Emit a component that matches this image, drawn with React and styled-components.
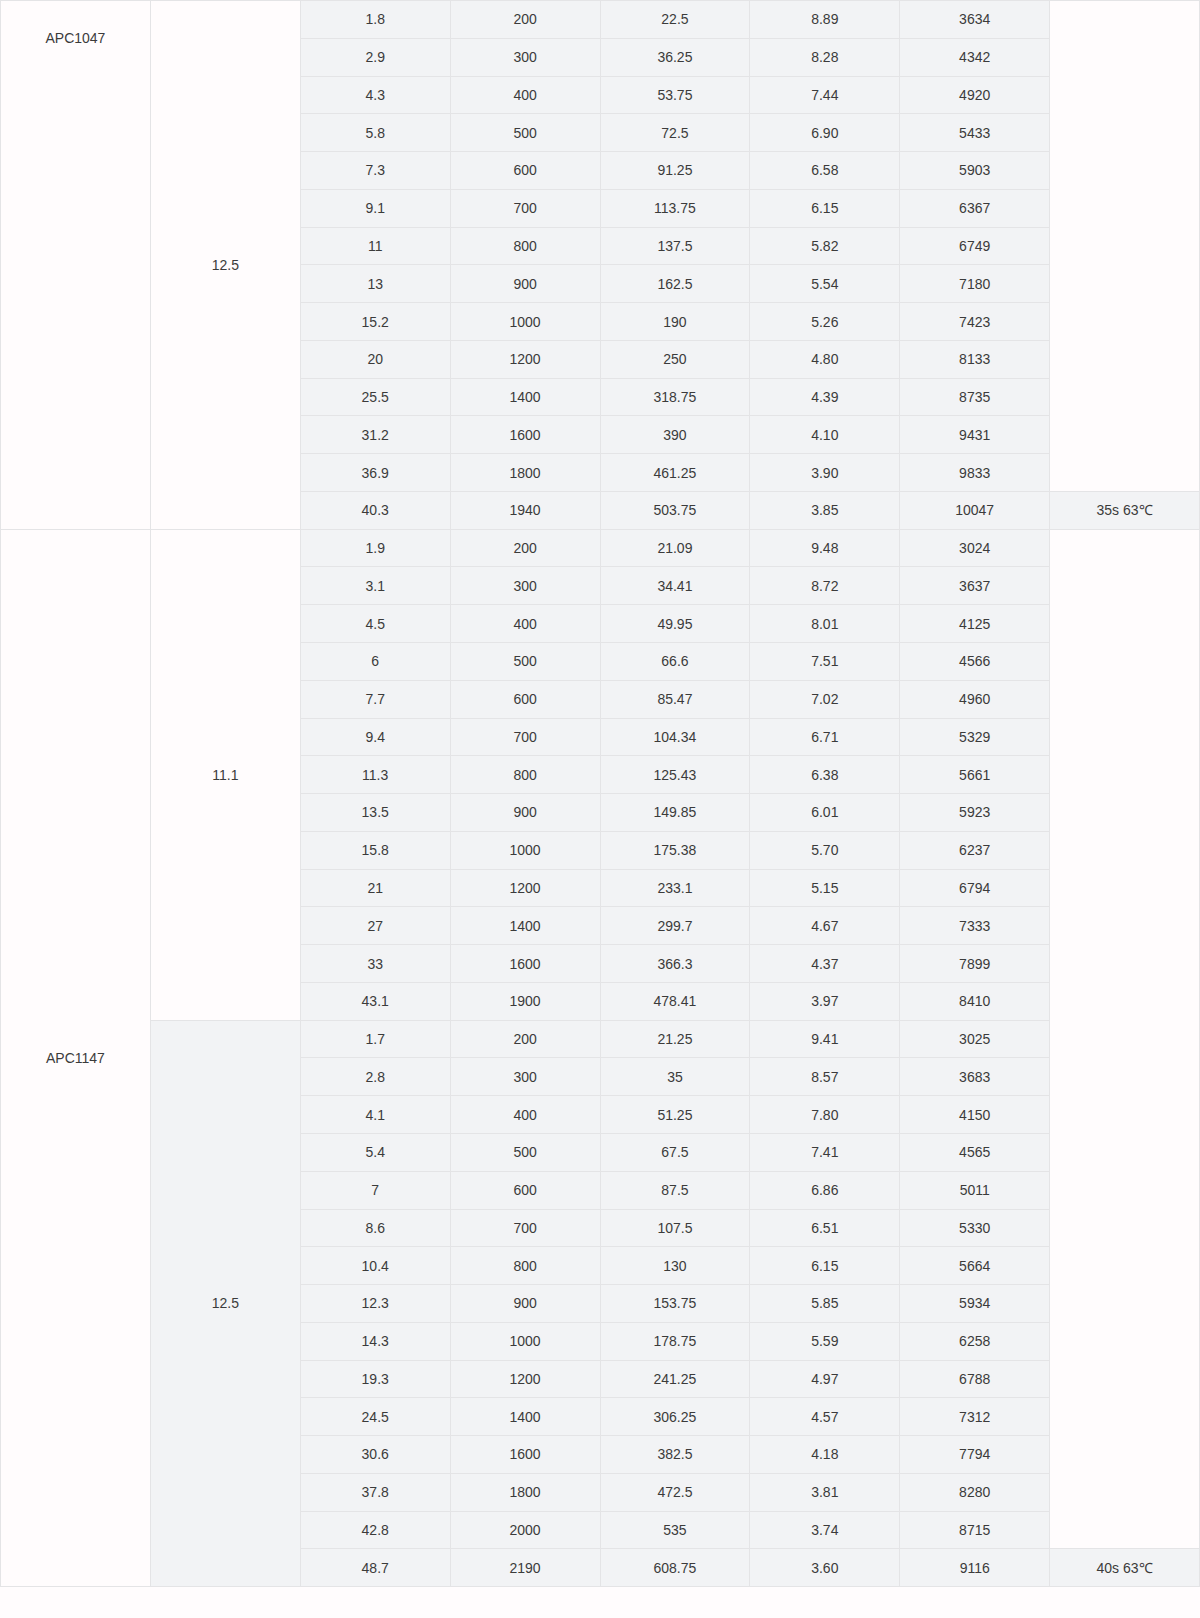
import styled, { createGlobalStyle } from 'styled-components';

const GlobalStyle = createGlobalStyle`
  html, body {
    margin: 0;
    padding: 0;
    background: #fffcfd;
  }
  body {
    font-family: 'Liberation Sans', Arial, sans-serif;
  }
`;

const Table = styled.table`
  width: 1200px;
  border-collapse: collapse;
  table-layout: fixed;
  font-size: 14px;
  color: #3b3b3b;
`;

const Column = styled.col`
  width: 12.5%;
`;

const Row = styled.tr`
  height: 37.78px;
`;

const Cell = styled.td`
  padding: 0;
  text-align: center;
  vertical-align: ${(p) => (p.$top ? 'top' : 'middle')};
  padding-top: ${(p) => (p.$top ? '29px' : '0')};
  border: 1px solid #e4e4e6;
  background: ${(p) => (p.$grey ? '#f2f3f5' : '#fffcfd')};
  line-height: 16px;
`;

// [电流, 转速, 功率, 效率, 拉力]
const apc1047_125 = [
  ['1.8', '200', '22.5', '8.89', '3634'],
  ['2.9', '300', '36.25', '8.28', '4342'],
  ['4.3', '400', '53.75', '7.44', '4920'],
  ['5.8', '500', '72.5', '6.90', '5433'],
  ['7.3', '600', '91.25', '6.58', '5903'],
  ['9.1', '700', '113.75', '6.15', '6367'],
  ['11', '800', '137.5', '5.82', '6749'],
  ['13', '900', '162.5', '5.54', '7180'],
  ['15.2', '1000', '190', '5.26', '7423'],
  ['20', '1200', '250', '4.80', '8133'],
  ['25.5', '1400', '318.75', '4.39', '8735'],
  ['31.2', '1600', '390', '4.10', '9431'],
  ['36.9', '1800', '461.25', '3.90', '9833'],
  ['40.3', '1940', '503.75', '3.85', '10047'],
];

const apc1147_111 = [
  ['1.9', '200', '21.09', '9.48', '3024'],
  ['3.1', '300', '34.41', '8.72', '3637'],
  ['4.5', '400', '49.95', '8.01', '4125'],
  ['6', '500', '66.6', '7.51', '4566'],
  ['7.7', '600', '85.47', '7.02', '4960'],
  ['9.4', '700', '104.34', '6.71', '5329'],
  ['11.3', '800', '125.43', '6.38', '5661'],
  ['13.5', '900', '149.85', '6.01', '5923'],
  ['15.8', '1000', '175.38', '5.70', '6237'],
  ['21', '1200', '233.1', '5.15', '6794'],
  ['27', '1400', '299.7', '4.67', '7333'],
  ['33', '1600', '366.3', '4.37', '7899'],
  ['43.1', '1900', '478.41', '3.97', '8410'],
];

const apc1147_125 = [
  ['1.7', '200', '21.25', '9.41', '3025'],
  ['2.8', '300', '35', '8.57', '3683'],
  ['4.1', '400', '51.25', '7.80', '4150'],
  ['5.4', '500', '67.5', '7.41', '4565'],
  ['7', '600', '87.5', '6.86', '5011'],
  ['8.6', '700', '107.5', '6.51', '5330'],
  ['10.4', '800', '130', '6.15', '5664'],
  ['12.3', '900', '153.75', '5.85', '5934'],
  ['14.3', '1000', '178.75', '5.59', '6258'],
  ['19.3', '1200', '241.25', '4.97', '6788'],
  ['24.5', '1400', '306.25', '4.57', '7312'],
  ['30.6', '1600', '382.5', '4.18', '7794'],
  ['37.8', '1800', '472.5', '3.81', '8280'],
  ['42.8', '2000', '535', '3.74', '8715'],
  ['48.7', '2190', '608.75', '3.60', '9116'],
];

const DataCells = ({ values }) =>
  values.map((v, i) => (
    <Cell key={i} $grey>
      {v}
    </Cell>
  ));

const App = () => {
  const g2Rows = apc1147_111.length + apc1147_125.length;
  return (
    <>
      <GlobalStyle />
      <Table>
        <colgroup>
          {Array.from({ length: 8 }).map((_, i) => (
            <Column key={i} />
          ))}
        </colgroup>
        <tbody>
          {/*------ APC1047 ------*/}
          {apc1047_125.map((r, i) => (
            <Row key={'a' + i}>
              {i === 0 && (
                <>
                  <Cell rowSpan={apc1047_125.length} $top>
                    APC1047
                  </Cell>
                  <Cell rowSpan={apc1047_125.length}>12.5</Cell>
                </>
              )}
              <DataCells values={r} />
              {i === 0 && <Cell rowSpan={apc1047_125.length - 1} />}
              {i === apc1047_125.length - 1 && <Cell $grey>35s 63℃</Cell>}
            </Row>
          ))}

          {/*------ APC1147 ------*/}
          {apc1147_111.map((r, i) => (
            <Row key={'b' + i}>
              {i === 0 && (
                <>
                  <Cell rowSpan={g2Rows}>APC1147</Cell>
                  <Cell rowSpan={apc1147_111.length}>11.1</Cell>
                </>
              )}
              <DataCells values={r} />
              {i === 0 && <Cell rowSpan={g2Rows - 1} />}
            </Row>
          ))}
          {apc1147_125.map((r, i) => (
            <Row key={'c' + i}>
              {i === 0 && (
                <Cell rowSpan={apc1147_125.length} $grey>
                  12.5
                </Cell>
              )}
              <DataCells values={r} />
              {i === apc1147_125.length - 1 && <Cell $grey>40s 63℃</Cell>}
            </Row>
          ))}
        </tbody>
      </Table>
    </>
  );
};

export default App;
